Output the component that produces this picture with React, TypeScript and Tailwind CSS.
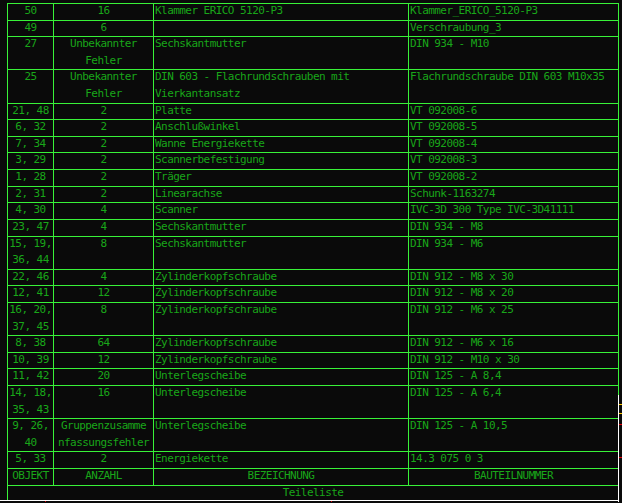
type Row = {
  obj: string[];
  anz: string[];
  bez: string[];
  teil: string;
  n: number;
};

const rows: Row[] = [
  { obj: ['50'], anz: ['16'], bez: ['Klammer ERICO 5120-P3'], teil: 'Klammer_ERICO_5120-P3', n: 1 },
  { obj: ['49'], anz: ['6'], bez: [], teil: 'Verschraubung_3', n: 1 },
  { obj: ['27'], anz: ['Unbekannter', 'Fehler'], bez: ['Sechskantmutter'], teil: 'DIN 934 - M10', n: 2 },
  {
    obj: ['25'],
    anz: ['Unbekannter', 'Fehler'],
    bez: ['DIN 603 - Flachrundschrauben mit', 'Vierkantansatz'],
    teil: 'Flachrundschraube DIN 603 M10x35',
    n: 2,
  },
  { obj: ['21, 48'], anz: ['2'], bez: ['Platte'], teil: 'VT 092008-6', n: 1 },
  { obj: ['6, 32'], anz: ['2'], bez: ['Anschlußwinkel'], teil: 'VT 092008-5', n: 1 },
  { obj: ['7, 34'], anz: ['2'], bez: ['Wanne Energiekette'], teil: 'VT 092008-4', n: 1 },
  { obj: ['3, 29'], anz: ['2'], bez: ['Scannerbefestigung'], teil: 'VT 092008-3', n: 1 },
  { obj: ['1, 28'], anz: ['2'], bez: ['Träger'], teil: 'VT 092008-2', n: 1 },
  { obj: ['2, 31'], anz: ['2'], bez: ['Linearachse'], teil: 'Schunk-1163274', n: 1 },
  { obj: ['4, 30'], anz: ['4'], bez: ['Scanner'], teil: 'IVC-3D 300 Type IVC-3D41111', n: 1 },
  { obj: ['23, 47'], anz: ['4'], bez: ['Sechskantmutter'], teil: 'DIN 934 - M8', n: 1 },
  { obj: ['15, 19,', '36, 44'], anz: ['8'], bez: ['Sechskantmutter'], teil: 'DIN 934 - M6', n: 2 },
  { obj: ['22, 46'], anz: ['4'], bez: ['Zylinderkopfschraube'], teil: 'DIN 912 - M8 x 30', n: 1 },
  { obj: ['12, 41'], anz: ['12'], bez: ['Zylinderkopfschraube'], teil: 'DIN 912 - M8 x 20', n: 1 },
  { obj: ['16, 20,', '37, 45'], anz: ['8'], bez: ['Zylinderkopfschraube'], teil: 'DIN 912 - M6 x 25', n: 2 },
  { obj: ['8, 38'], anz: ['64'], bez: ['Zylinderkopfschraube'], teil: 'DIN 912 - M6 x 16', n: 1 },
  { obj: ['10, 39'], anz: ['12'], bez: ['Zylinderkopfschraube'], teil: 'DIN 912 - M10 x 30', n: 1 },
  { obj: ['11, 42'], anz: ['20'], bez: ['Unterlegscheibe'], teil: 'DIN 125 - A 8,4', n: 1 },
  { obj: ['14, 18,', '35, 43'], anz: ['16'], bez: ['Unterlegscheibe'], teil: 'DIN 125 - A 6,4', n: 2 },
  {
    obj: ['9, 26,', '40'],
    anz: ['Gruppenzusamme', 'nfassungsfehler'],
    bez: ['Unterlegscheibe'],
    teil: 'DIN 125 - A 10,5',
    n: 2,
  },
  { obj: ['5, 33'], anz: ['2'], bez: ['Energiekette'], teil: '14.3 075 0 3', n: 1 },
];

function Cell({ lines, n, center }: { lines: string[]; n: number; center?: boolean }) {
  return (
    <div
      className={`bg-[#0a0a0a] whitespace-nowrap ${n === 2 ? 'h-[32.22px]' : 'h-[15.61px]'} ${
        center ? 'text-center' : 'pl-[1px]'
      }`}
    >
      <div className="-mt-px">
        {lines.map((l, i) => (
          <div key={i}>{l}</div>
        ))}
      </div>
    </div>
  );
}

export default function App() {
  return (
    <div className="relative w-[622px] h-[503px] overflow-hidden bg-[#0a0a0a] font-['DejaVu_Sans_Mono',monospace] text-[11px] leading-[16.61px] tracking-[-0.55px] text-[#19a619]">
      <div className="pt-[3px] pl-[7px]">
        <div className="grid w-[612px] grid-cols-[45px_99px_254px_209px] gap-px bg-[#38f238] p-px">
          {rows.map((r, i) => (
            <div key={i} className="contents">
              <Cell lines={r.obj} n={r.n} center />
              <Cell lines={r.anz} n={r.n} center />
              <Cell lines={r.bez} n={r.n} />
              <Cell lines={[r.teil]} n={r.n} />
            </div>
          ))}
          <Cell lines={['OBJEKT']} n={1} center />
          <Cell lines={['ANZAHL']} n={1} center />
          <Cell lines={['BEZEICHNUNG']} n={1} center />
          <Cell lines={['BAUTEILNUMMER']} n={1} center />
        </div>
        <div className="h-[15.3px] w-[612px] border-l border-r border-l-[#38f238] border-r-white text-center">
          <div className="-mt-px">Teileliste</div>
        </div>
      </div>
      <div className="h-px w-[619px] bg-white" />
      <div className="flex h-px">
        <span className="ml-[45px] w-px bg-red-600" />
        <span className="ml-[285px] w-px bg-red-600" />
      </div>

      {/* drawing frame edge with its marks, drawn over the table's right border */}
      <div className="absolute left-[618px] top-[395px] flex h-[107px] w-[4px] flex-col border-l border-white">
        <span className="mt-[9px] h-px bg-yellow-400" />
        <span className="mt-[8px] h-px bg-yellow-400" />
        <span className="mt-[10px] h-px bg-red-600" />
        <span className="mt-[32px] h-px bg-red-600" />
      </div>
    </div>
  );
}
